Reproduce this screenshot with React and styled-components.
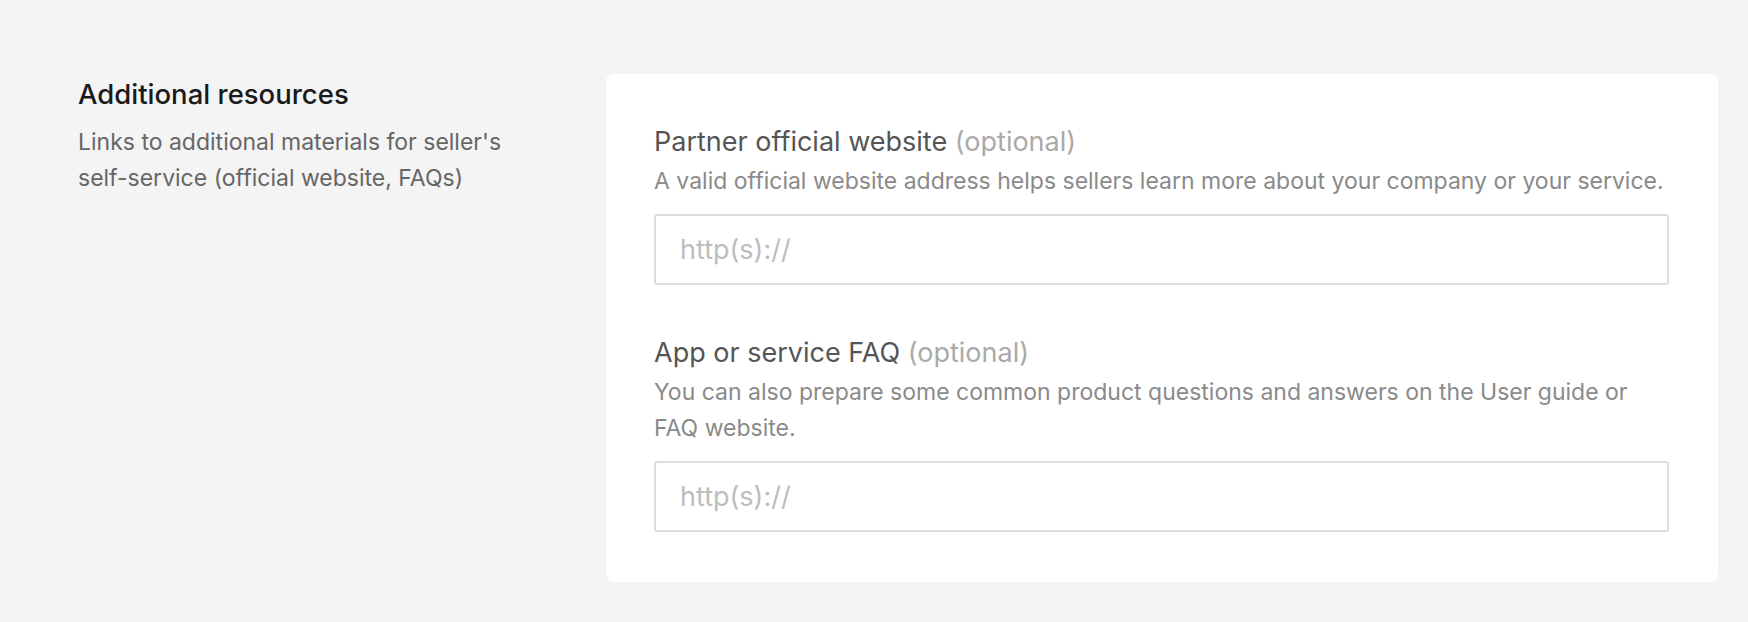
import styled, {createGlobalStyle} from 'styled-components';

const GlobalStyle = createGlobalStyle`
  body {
    margin: 0;
    background: #f4f4f4;
    font-family: Inter, "Noto Sans", sans-serif;
  }
`;

const Page = styled.main`
  display: grid;
  grid-template-columns: 528px 1fr;
  padding: 74px 30px 40px 78px;
  min-height: 622px;
  box-sizing: border-box;
`;

const Intro = styled.section`
  display: flex;
  flex-direction: column;
  gap: 12px;
  padding-top: 2px;
`;

const Title = styled.h2`
  margin: 0;
  font-size: 27.5px;
  line-height: 36px;
  font-weight: 500;
  color: #1a1a1a;
`;

const Subtitle = styled.p`
  margin: 0;
  max-width: 460px;
  font-size: 23px;
  line-height: 36px;
  color: #666;
`;

const Card = styled.section`
  background: #fff;
  border-radius: 8px;
  padding: 50px 49px 50px 48px;
  display: flex;
  flex-direction: column;
  gap: 50px;
`;

const Field = styled.div`
  display: flex;
  flex-direction: column;
`;

const Label = styled.label`
  font-size: 27px;
  line-height: 36px;
  color: #555;

  & > span {
    color: #aaa;
  }
`;

const Hint = styled.p`
  margin: 3px 0 15px;
  font-size: 23px;
  line-height: 36px;
  color: #8a8a8a;
`;

const Input = styled.input`
  box-sizing: border-box;
  width: 100%;
  height: 71px;
  border: 2px solid #ddd;
  border-radius: 3px;
  padding: 0 24px;
  font-family: inherit;
  font-size: 27px;
  color: #333;
  outline: none;

  &::placeholder {
    color: #bdbdbd;
  }
`;

const fields = [
    {
        id: 'site',
        label: 'Partner official website',
        hint: 'A valid official website address helps sellers learn more about your company or your service.',
    },
    {
        id: 'faq',
        label: 'App or service FAQ',
        hint: 'You can also prepare some common product questions and answers on the User guide or FAQ website.',
    },
];

export default function App() {
    return (
        <>
            <GlobalStyle/>
            <Page>
                <Intro>
                    <Title>Additional resources</Title>
                    <Subtitle>Links to additional materials for seller's self-service (official website, FAQs)</Subtitle>
                </Intro>
                <Card>
                    {fields.map((f) => (
                        <Field key={f.id}>
                            <Label htmlFor={f.id}>{f.label} <span>(optional)</span></Label>
                            <Hint>{f.hint}</Hint>
                            <Input id={f.id} placeholder="http(s)://"/>
                        </Field>
                    ))}
                </Card>
            </Page>
        </>
    );
}
